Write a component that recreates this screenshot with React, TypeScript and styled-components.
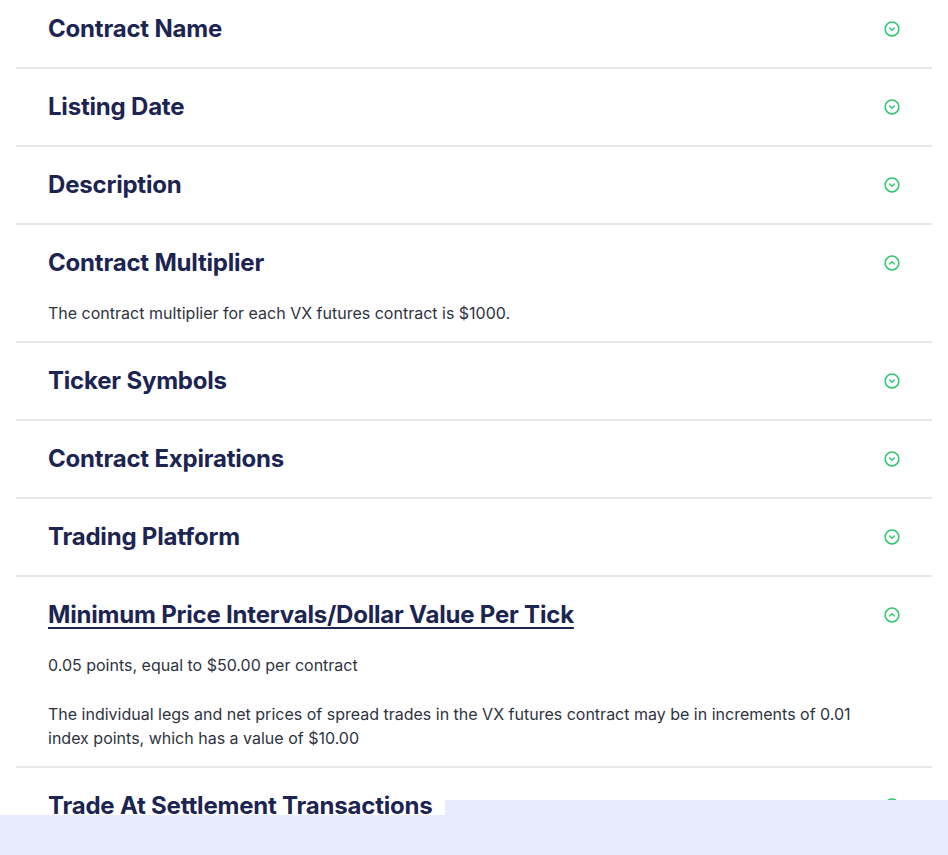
import React from "react";
import styled, { createGlobalStyle } from "styled-components";

const GlobalStyle = createGlobalStyle`
  html, body {
    margin: 0;
    padding: 0;
    overflow: hidden;
    background: #ffffff;
  }
  * {
    box-sizing: border-box;
  }
`;

type Item = {
  title: string;
  open?: boolean;
  hover?: boolean;
  body?: string[];
};

const items: Item[] = [
  { title: "Contract Name" },
  { title: "Listing Date" },
  { title: "Description" },
  {
    title: "Contract Multiplier",
    open: true,
    body: ["The contract multiplier for each VX futures contract is $1000."],
  },
  { title: "Ticker Symbols" },
  { title: "Contract Expirations" },
  { title: "Trading Platform" },
  {
    title: "Minimum Price Intervals/Dollar Value Per Tick",
    open: true,
    hover: true,
    body: [
      "0.05 points, equal to $50.00 per contract",
      "The individual legs and net prices of spread trades in the VX futures contract may be in increments of 0.01 index points, which has a value of $10.00",
    ],
  },
  { title: "Trade At Settlement Transactions" },
];

function Chevron({ open }: { open?: boolean }) {
  return (
    <svg width="16" height="16" viewBox="0 0 16 16" fill="none">
      <circle cx="8" cy="8" r="6.9" stroke="#2fc771" strokeWidth="1.5" />
      <path
        d={open ? "M5.6 9.1 L8 6.7 L10.4 9.1" : "M5.6 6.9 L8 9.3 L10.4 6.9"}
        stroke="#2fc771"
        strokeWidth="1.4"
        strokeLinecap="round"
        strokeLinejoin="round"
      />
    </svg>
  );
}

export default function App() {
  return (
    <>
      <GlobalStyle />
      <Page>
        <List>
          {items.map((item, key) => (
            <Row key={key}>
              <Header>
                <Title $hover={item.hover}>{item.title}</Title>
                <Chevron open={item.open} />
              </Header>
              {item.open && item.body && (
                <Panel>
                  {item.body.map((p, i) => (
                    <Paragraph key={i}>{p}</Paragraph>
                  ))}
                </Panel>
              )}
            </Row>
          ))}
        </List>
      </Page>
      <BottomOverlay>
        <OverlayTab />
        <OverlayBar />
      </BottomOverlay>
    </>
  );
}

const Page = styled.div`
  width: 948px;
  padding: 0 16px;
  font-family: Inter, "Noto Sans", "Liberation Sans", sans-serif;
`;

const List = styled.div`
  display: flex;
  flex-direction: column;
`;

const Row = styled.div`
  border-bottom: 2px solid #e8e8e9;
  padding: 0 32px;

  &:first-child > div:first-child {
    padding-top: 13px;
  }
  &:last-child {
    border-bottom: none;
  }
`;

const Header = styled.div`
  display: flex;
  align-items: center;
  justify-content: space-between;
  padding: 22px 0;
`;

const Title = styled.div<{ $hover?: boolean }>`
  color: #1c2452;
  font-size: 24px;
  font-weight: 700;
  line-height: 32px;
  letter-spacing: -0.2px;
  text-decoration: ${(p) => (p.$hover ? "underline" : "none")};
  text-decoration-thickness: 2px;
  text-underline-offset: 4px;
  background: #ffffff;
  padding-right: 10px;
`;

const Panel = styled.div`
  display: flex;
  flex-direction: column;
  gap: 25px;
  padding: 0 40px 16px 0;
`;

const Paragraph = styled.p`
  margin: 0;
  color: #2e3340;
  font-size: 16px;
  font-weight: 400;
  line-height: 24px;
`;

const BottomOverlay = styled.div`
  position: fixed;
  left: 0;
  right: 0;
  bottom: 0;
  display: flex;
  flex-direction: column;
  align-items: flex-end;
`;

const OverlayTab = styled.div`
  width: 503px;
  height: 15px;
  background: #e7ebfd;
`;

const OverlayBar = styled.div`
  width: 100%;
  height: 40px;
  background: #e7ebfd;
`;
